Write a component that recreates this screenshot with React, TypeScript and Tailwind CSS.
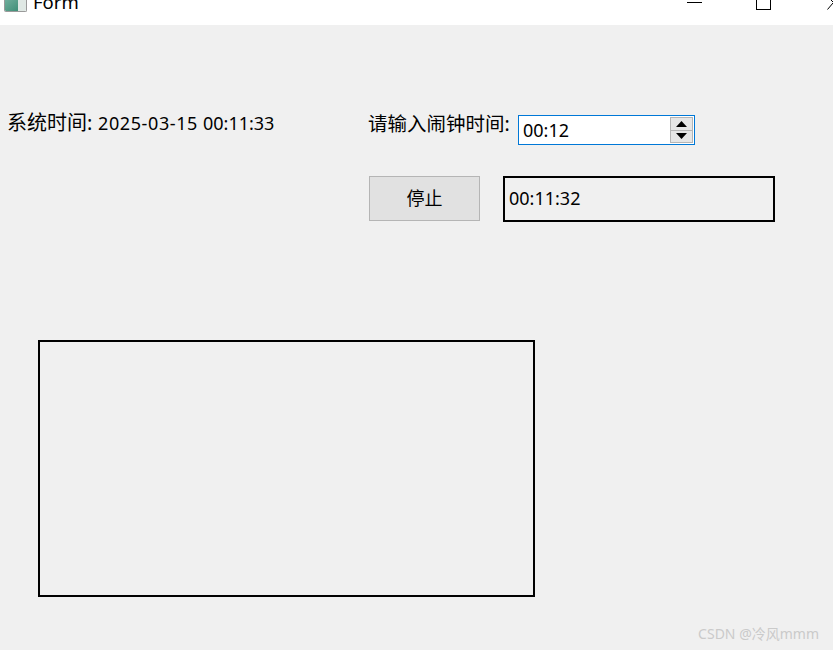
const font = { fontFamily: '"Noto Sans", "Noto Sans CJK SC", sans-serif' };

function TitleBar() {
  return (
    <div className="flex h-[25px] items-start overflow-hidden bg-white">
      <div className="ml-[4px] flex h-[12px] w-[23px] overflow-hidden rounded-b-[2px] border-x border-b border-[#9a9a9a]">
        <div className="h-full w-[13px] bg-gradient-to-br from-[#6fae9c] to-[#3f8f78]" />
        <div className="h-full flex-1 bg-[#dfe8e4]" />
      </div>
      <span className="ml-[6px] mt-[-10px] text-[18.5px] leading-[24px] text-black">Form</span>
      <div className="ml-auto flex items-start">
        <div className="mt-[2px] h-px w-[15px] bg-black" />
        <div className="ml-[54px] h-[10px] w-[15px] border-x border-b border-black" />
        <svg className="ml-[56px] mt-0" width="6" height="11" viewBox="0 0 6 11">
          <path d="M0.5 9.5 L6 3" stroke="#000" fill="none" />
          <path d="M4 0 L6 2" stroke="#000" fill="none" />
        </svg>
      </div>
    </div>
  );
}

function Spin() {
  return (
    <div className="flex h-[30px] w-[177px] items-center justify-between border border-[#0078d7] bg-white pl-[4px] pr-[1px] text-[18px] leading-none">
      <span className="text-black">00:12</span>
      <div className="flex h-[26px] w-[23px] flex-col border border-[#b5b5b5] bg-[#e6e6e6]">
        <div className="flex flex-1 items-center justify-center border-b border-[#b5b5b5]">
          <svg width="11" height="6" viewBox="0 0 11 6"><path d="M5.5 0 L11 6 H0 Z" fill="#000" /></svg>
        </div>
        <div className="flex flex-1 items-center justify-center">
          <svg width="11" height="6" viewBox="0 0 11 6"><path d="M0 0 H11 L5.5 6 Z" fill="#000" /></svg>
        </div>
      </div>
    </div>
  );
}

export default function App() {
  return (
    <div className="h-[650px] w-[833px] overflow-hidden bg-[#f0f0f0] text-black" style={font}>
      <TitleBar />
      <div className="flex pt-[90px]">
        <div className="w-[369px] pl-[7px]">
          <div className="flex h-[16px] items-baseline whitespace-nowrap text-[18px] leading-[16px]">
            <span className="w-[91px] text-[20px]">系统时间:</span>
            <span className="tracking-[0.6px]">2025-03-15</span>
            <span className="ml-[5px]">00:11:33</span>
          </div>
        </div>
        <div className="flex flex-col">
          <div className="flex items-start">
            <span className="ml-[-1px] w-[150px] whitespace-nowrap text-[19.5px] leading-[17px]">请输入闹钟时间:</span>
            <Spin />
          </div>
          <div className="mt-[31px] flex items-start">
            <button className="flex h-[45px] w-[111px] items-center justify-center border border-[#b5b5b5] bg-[#e1e1e1] text-[18px]">
              停止
            </button>
            <div className="ml-[23px] flex h-[46px] w-[272px] items-center border-2 border-black pb-[2px] pl-[4px] text-[18px]">
              00:11:32
            </div>
          </div>
        </div>
      </div>
      <div className="ml-[38px] mt-[118px] h-[257px] w-[497px] border-2 border-black" />
      <div className="mt-[27px] pr-[14px] text-right text-[14px] leading-[20px] text-[#cacaca]">CSDN @冷风mmm</div>
    </div>
  );
}
